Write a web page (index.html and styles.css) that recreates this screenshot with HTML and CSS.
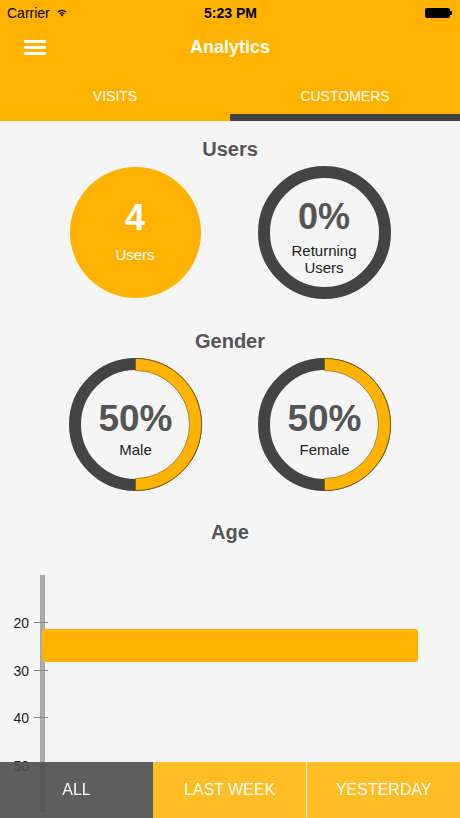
FILE: index.html
```html
<!DOCTYPE html>
<html lang="en">
<head>
    <meta charset="UTF-8">
    <meta name="viewport" content="width=device-width, initial-scale=1.0">
    <title>Analytics</title>
    <link rel="stylesheet" href="styles.css">
</head>
<body>
    <header class="topbar">
        <div class="status">
            <span class="carrier">Carrier
                <svg class="wifi" width="12" height="9" viewBox="0 0 14 11">
                    <path d="M7 10.5 L5.2 8.4 A2.8 2.8 0 0 1 8.8 8.4 Z" fill="#000"/>
                    <path d="M3.7 6.6 A5.2 5.2 0 0 1 10.3 6.6 L9.3 7.7 A3.8 3.8 0 0 0 4.7 7.7 Z" fill="#000"/>
                    <path d="M1.5 4.2 A8.3 8.3 0 0 1 12.5 4.2 L11.3 5.5 A6.6 6.6 0 0 0 2.7 5.5 Z" fill="#000"/>
                </svg>
            </span>
            <span class="time">5:23 PM</span>
            <span class="battery"><span class="cell"></span><span class="nub"></span></span>
        </div>
        <div class="navbar">
            <button class="menu"><span></span><span></span><span></span></button>
            <h1>Analytics</h1>
            <span></span>
        </div>
        <nav class="tabs">
            <a class="tab">VISITS</a>
            <a class="tab active">CUSTOMERS</a>
        </nav>
    </header>

    <main class="content">
        <section class="group">
            <h2>Users</h2>
            <div class="pair">
                <div class="stat solid">
                    <div class="value">4</div>
                    <div class="label">Users</div>
                </div>
                <div class="stat ring">
                    <svg class="ring-art" width="133" height="133" viewBox="0 0 133 133">
                        <circle cx="66.5" cy="66.5" r="60.5" fill="none" stroke="#444" stroke-width="12"/>
                    </svg>
                    <div class="value">0%</div>
                    <div class="label">Returning<br>Users</div>
                </div>
            </div>
        </section>

        <section class="group gender">
            <h2>Gender</h2>
            <div class="pair">
                <div class="stat ring half">
                    <svg class="ring-art" width="133" height="133" viewBox="0 0 133 133">
                        <circle cx="66.5" cy="66.5" r="60.5" fill="none" stroke="#444" stroke-width="12"/>
                        <path d="M66.5 0.5 A66 66 0 0 1 66.5 132.5 L66.5 120.5 A54 54 0 0 0 66.5 12.5 Z" fill="#ffb300" stroke="#6e5400" stroke-width="0.6"/>
                    </svg>
                    <div class="value">50%</div>
                    <div class="label">Male</div>
                </div>
                <div class="stat ring half">
                    <svg class="ring-art" width="133" height="133" viewBox="0 0 133 133">
                        <circle cx="66.5" cy="66.5" r="60.5" fill="none" stroke="#444" stroke-width="12"/>
                        <path d="M66.5 0.5 A66 66 0 0 1 66.5 132.5 L66.5 120.5 A54 54 0 0 0 66.5 12.5 Z" fill="#ffb300" stroke="#6e5400" stroke-width="0.6"/>
                    </svg>
                    <div class="value">50%</div>
                    <div class="label">Female</div>
                </div>
            </div>
        </section>

        <section class="group age">
            <h2>Age</h2>
            <svg class="chart" width="460" height="242" viewBox="0 0 460 242">
                <rect x="40" y="0" width="5" height="237" fill="#a9a9a9"/>
                <g stroke="#888" stroke-width="1">
                    <line x1="34" y1="47.5" x2="48" y2="47.5"/>
                    <line x1="34" y1="95.5" x2="48" y2="95.5"/>
                    <line x1="34" y1="142.5" x2="48" y2="142.5"/>
                    <line x1="34" y1="190.5" x2="48" y2="190.5"/>
                </g>
                <g class="ticks">
                    <text x="29" y="53">20</text>
                    <text x="29" y="101">30</text>
                    <text x="29" y="148">40</text>
                    <text x="29" y="196">50</text>
                </g>
                <rect x="42" y="54" width="376" height="33" rx="3" fill="#ffb300"/>
            </svg>
        </section>
    </main>

    <footer class="range">
        <a class="range-item current">ALL</a>
        <a class="range-item">LAST WEEK</a>
        <a class="range-item">YESTERDAY</a>
    </footer>
</body>
</html>
```

FILE: styles.css
```css
html, body {
    margin: 0;
    height: 100%;
}
body {
    background: #f5f5f5;
    font-family: "Liberation Sans", Arial, sans-serif;
    overflow: hidden;
}
.topbar {
    background: #ffb300;
}
.status {
    height: 25px;
    display: grid;
    grid-template-columns: 1fr auto 1fr;
    align-items: center;
    padding: 0 6px 0 7px;
    font-size: 14px;
    color: #000;
}
.carrier {
    display: flex;
    align-items: center;
    gap: 6px;
}
.time {
    font-weight: bold;
}
.battery {
    justify-self: end;
    display: flex;
    align-items: center;
    margin-right: 2px;
}
.battery .cell {
    width: 25px;
    height: 10px;
    background: #000;
    border-radius: 2px;
}
.battery .nub {
    width: 2px;
    height: 4px;
    background: #000;
    border-radius: 0 1px 1px 0;
}
.navbar {
    height: 53px;
    display: grid;
    grid-template-columns: 1fr auto 1fr;
    align-items: center;
    padding: 0 24px 9px;
    box-sizing: border-box;
}
.menu {
    display: flex;
    flex-direction: column;
    gap: 3px;
    width: 22px;
    padding: 0;
    background: none;
    border: 0;
}
.menu span {
    height: 3px;
    background: #fff;
    border-radius: 1px;
}
.navbar h1 {
    margin: 0;
    font-size: 18px;
    color: #fff;
}
.tabs {
    display: flex;
    height: 43px;
}
.tab {
    flex: 1;
    display: flex;
    align-items: center;
    justify-content: center;
    font-size: 14px;
    color: #fff;
    border-bottom: 7px solid transparent;
}
.tab.active {
    border-bottom-color: #444;
}
.content {
    padding-top: 16px;
}
.group h2 {
    margin: 0 0 5px;
    font-size: 20px;
    line-height: 24px;
    text-align: center;
    color: #555;
}
.gender {
    margin-top: 30px;
}
.age {
    margin-top: 29px;
}
.pair {
    display: flex;
    justify-content: center;
    gap: 56px;
}
.stat {
    position: relative;
    width: 133px;
    height: 133px;
    box-sizing: border-box;
    border-radius: 50%;
    display: flex;
    flex-direction: column;
    align-items: center;
    text-align: center;
    padding-top: 33px;
}
.ring-art {
    position: absolute;
    top: 0;
    left: 0;
}
.stat .value {
    position: relative;
    font-size: 36px;
    line-height: 36px;
    font-weight: bold;
    color: #555;
}
.stat .label {
    position: relative;
    margin-top: 7px;
    font-size: 15px;
    line-height: 17px;
    color: #222;
}
.stat.solid {
    background: #ffb300;
    margin-top: 1px;
    width: 131px;
    height: 131px;
    padding-top: 33px;
    margin-right: 1px;
}
.stat.solid .value,
.stat.solid .label {
    color: #fff;
}
.stat.solid .label {
    margin-top: 10px;
    font-size: 15px;
}
.stat.half {
    padding-top: 42px;
}
.stat.half .value {
    font-size: 37px;
    line-height: 37px;
}
.stat.half .label {
    margin-top: 4px;
}
.chart {
    display: block;
    margin-top: 31px;
}
.ticks text {
    font-family: "Liberation Sans", Arial, sans-serif;
    font-size: 14px;
    fill: #222;
    text-anchor: end;
}
.range {
    position: fixed;
    left: 0;
    right: 0;
    bottom: 0;
    height: 56px;
    display: flex;
}
.range-item {
    flex: 1;
    display: flex;
    align-items: center;
    justify-content: center;
    font-size: 16px;
    color: #fff;
    background: rgba(255, 179, 0, 0.85);
}
.range-item + .range-item + .range-item {
    border-left: 1px solid #fff;
}
.range-item.current {
    background: rgba(80, 80, 80, 0.92);
}
```
